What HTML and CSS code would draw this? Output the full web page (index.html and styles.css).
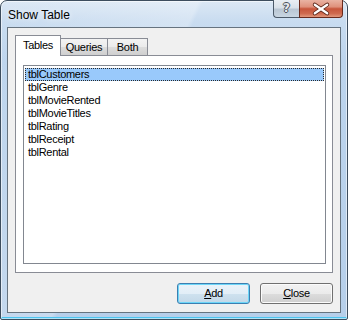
FILE: index.html
```html
<!DOCTYPE html>
<html>
<head>
<meta charset="utf-8">
<link rel="stylesheet" href="styles.css">
</head>
<body>
<div class="window">
  <div class="titlebar"><span class="title">Show Table</span></div>
  <div class="caption-btns">
    <div class="cbtn help"><span class="qmark">?</span></div>
    <div class="cbtn close">
      <svg width="44" height="18" viewBox="0 0 44 18">
        <path d="M15.5 4.5 L28.5 13.5 M28.5 4.5 L15.5 13.5" stroke="#5a2518" stroke-width="4.2" stroke-linecap="round" fill="none"/>
        <path d="M15.5 4.5 L28.5 13.5 M28.5 4.5 L15.5 13.5" stroke="#ffffff" stroke-width="2.4" stroke-linecap="round" fill="none"/>
      </svg>
    </div>
  </div>
  <div class="client">
    <div class="tabs">
      <div class="tab active">Tables</div>
      <div class="tab t-queries">Queries</div>
      <div class="tab t-both">Both</div>
    </div>
    <div class="panel">
      <div class="listbox">
        <div class="item selected">tblCustomers</div>
        <div class="item">tblGenre</div>
        <div class="item">tblMovieRented</div>
        <div class="item">tblMovieTitles</div>
        <div class="item">tblRating</div>
        <div class="item">tblReceipt</div>
        <div class="item">tblRental</div>
      </div>
    </div>
    <div class="buttons">
      <div class="btn default"><u>A</u>dd</div>
      <div class="btn"><u>C</u>lose</div>
    </div>
  </div>
</div>
</body>
</html>
```
FILE: styles.css
```css
html, body {
  margin: 0;
  padding: 0;
  background: #ffffff;
}
body {
  width: 348px;
  height: 320px;
  font-family: "Liberation Sans", Arial, sans-serif;
  font-size: 11px;
  color: #000;
}
.window {
  position: relative;
  box-sizing: border-box;
  width: 348px;
  height: 320px;
  border: 1px solid #3d4d5e;
  border-radius: 7px 7px 2px 2px;
  padding: 0 6px 6px 6px;
  background:
    linear-gradient(115deg, rgba(255,255,255,0) 0%, rgba(255,255,255,0.25) 40%, rgba(255,255,255,0) 41%, rgba(255,255,255,0) 100%),
    linear-gradient(180deg, #dce8f5 0px, #c9dcf0 20px, #bcd4ed 60px, #b6cfea 100%);
  box-shadow: inset 0 0 0 1px rgba(255,255,255,0.55), inset 0 -2px 0 #4cc4ef;
}
.titlebar {
  height: 26px;
  display: flex;
  align-items: center;
}
.title {
  font-size: 12px;
  padding-left: 1px;
  padding-top: 1px;
  color: #000;
  text-shadow: 0 0 6px rgba(255,255,255,0.9);
}
.caption-btns {
  position: absolute;
  top: -1px;
  right: 4px;
  display: flex;
}
.cbtn {
  box-sizing: border-box;
  height: 18px;
  border: 1px solid #4b5968;
  border-top: none;
  display: flex;
  align-items: center;
  justify-content: center;
}
.help {
  width: 26px;
  border-radius: 0 0 0 4px;
  border-right: none;
  background: linear-gradient(180deg, #e9eef3 0%, #d9e1e9 45%, #b9c6d3 55%, #c9d6e2 100%);
}
.qmark {
  font-family: "DejaVu Sans", sans-serif;
  font-weight: bold;
  font-size: 12px;
  color: #e6e9ec;
  text-shadow: 1px 0 0 #48525c, -1px 0 0 #48525c, 0 1px 0 #48525c, 0 -1px 0 #48525c;
  margin-top: -1px;
}
.close {
  width: 44px;
  border-color: #6a2a1c;
  border-radius: 0 0 4px 0;
  background: linear-gradient(180deg, #e9b3a3 0%, #df917c 40%, #c7553b 52%, #cf6a4e 80%, #e2987c 100%);
}
.close svg { display: block; }
.client {
  box-sizing: border-box;
  height: 286px;
  border: 1px solid #66737f;
  background: #f0f0f0;
  padding: 7px 7px 8px 7px;
  display: flex;
  flex-direction: column;
  letter-spacing: -0.3px;
}
.tabs {
  display: flex;
  align-items: flex-end;
  height: 20px;
}
.tab {
  box-sizing: border-box;
  height: 17px;
  border: 1px solid #898c95;
  border-bottom: none;
  margin-left: -1px;
  background: linear-gradient(180deg, #f3f3f3 0%, #ebebeb 50%, #dddddd 50%, #cfcfcf 100%);
  text-align: center;
  line-height: 16px;
}
.tab.active {
  position: relative;
  z-index: 1;
  margin-left: 0;
  width: 46px;
  height: 21px;
  margin-bottom: -1px;
  background: #ffffff;
  line-height: 18px;
}
.t-queries { width: 48px; }
.t-both { width: 41px; }
.panel {
  box-sizing: border-box;
  width: 318px;
  height: 218px;
  border: 1px solid #898c95;
  background: #ffffff;
  padding: 9px 6px 8px 7px;
}
.listbox {
  box-sizing: border-box;
  width: 303px;
  height: 199px;
  border: 1px solid #828790;
  padding: 2px 1px 1px 1px;
  background: #fff;
}
.item {
  height: 11px;
  line-height: 11px;
  border: 1px solid transparent;
  padding-left: 2px;
  white-space: nowrap;
}
.item.selected {
  background: #99c9fb;
  border: 1px dotted #2a2a2a;
}
.buttons {
  margin-top: 10px;
  display: flex;
  justify-content: flex-end;
  gap: 10px;
}
.btn {
  box-sizing: border-box;
  width: 73px;
  height: 21px;
  border: 1px solid #707070;
  border-radius: 3px;
  background: linear-gradient(180deg, #f2f2f2 0%, #ebebeb 50%, #dddddd 50%, #cfcfcf 100%);
  box-shadow: inset 0 0 0 1px #fbfbfb;
  text-align: center;
  line-height: 19px;
}
.btn.default {
  border-color: #3c7fb1;
  background: linear-gradient(180deg, #eaf3f9 0%, #e2eef7 50%, #cfe2ef 50%, #c2d8e8 100%);
  box-shadow: inset 0 0 0 1px #6dd6f8;
}
.btn u { text-decoration: underline; text-underline-offset: 1px; }
```
